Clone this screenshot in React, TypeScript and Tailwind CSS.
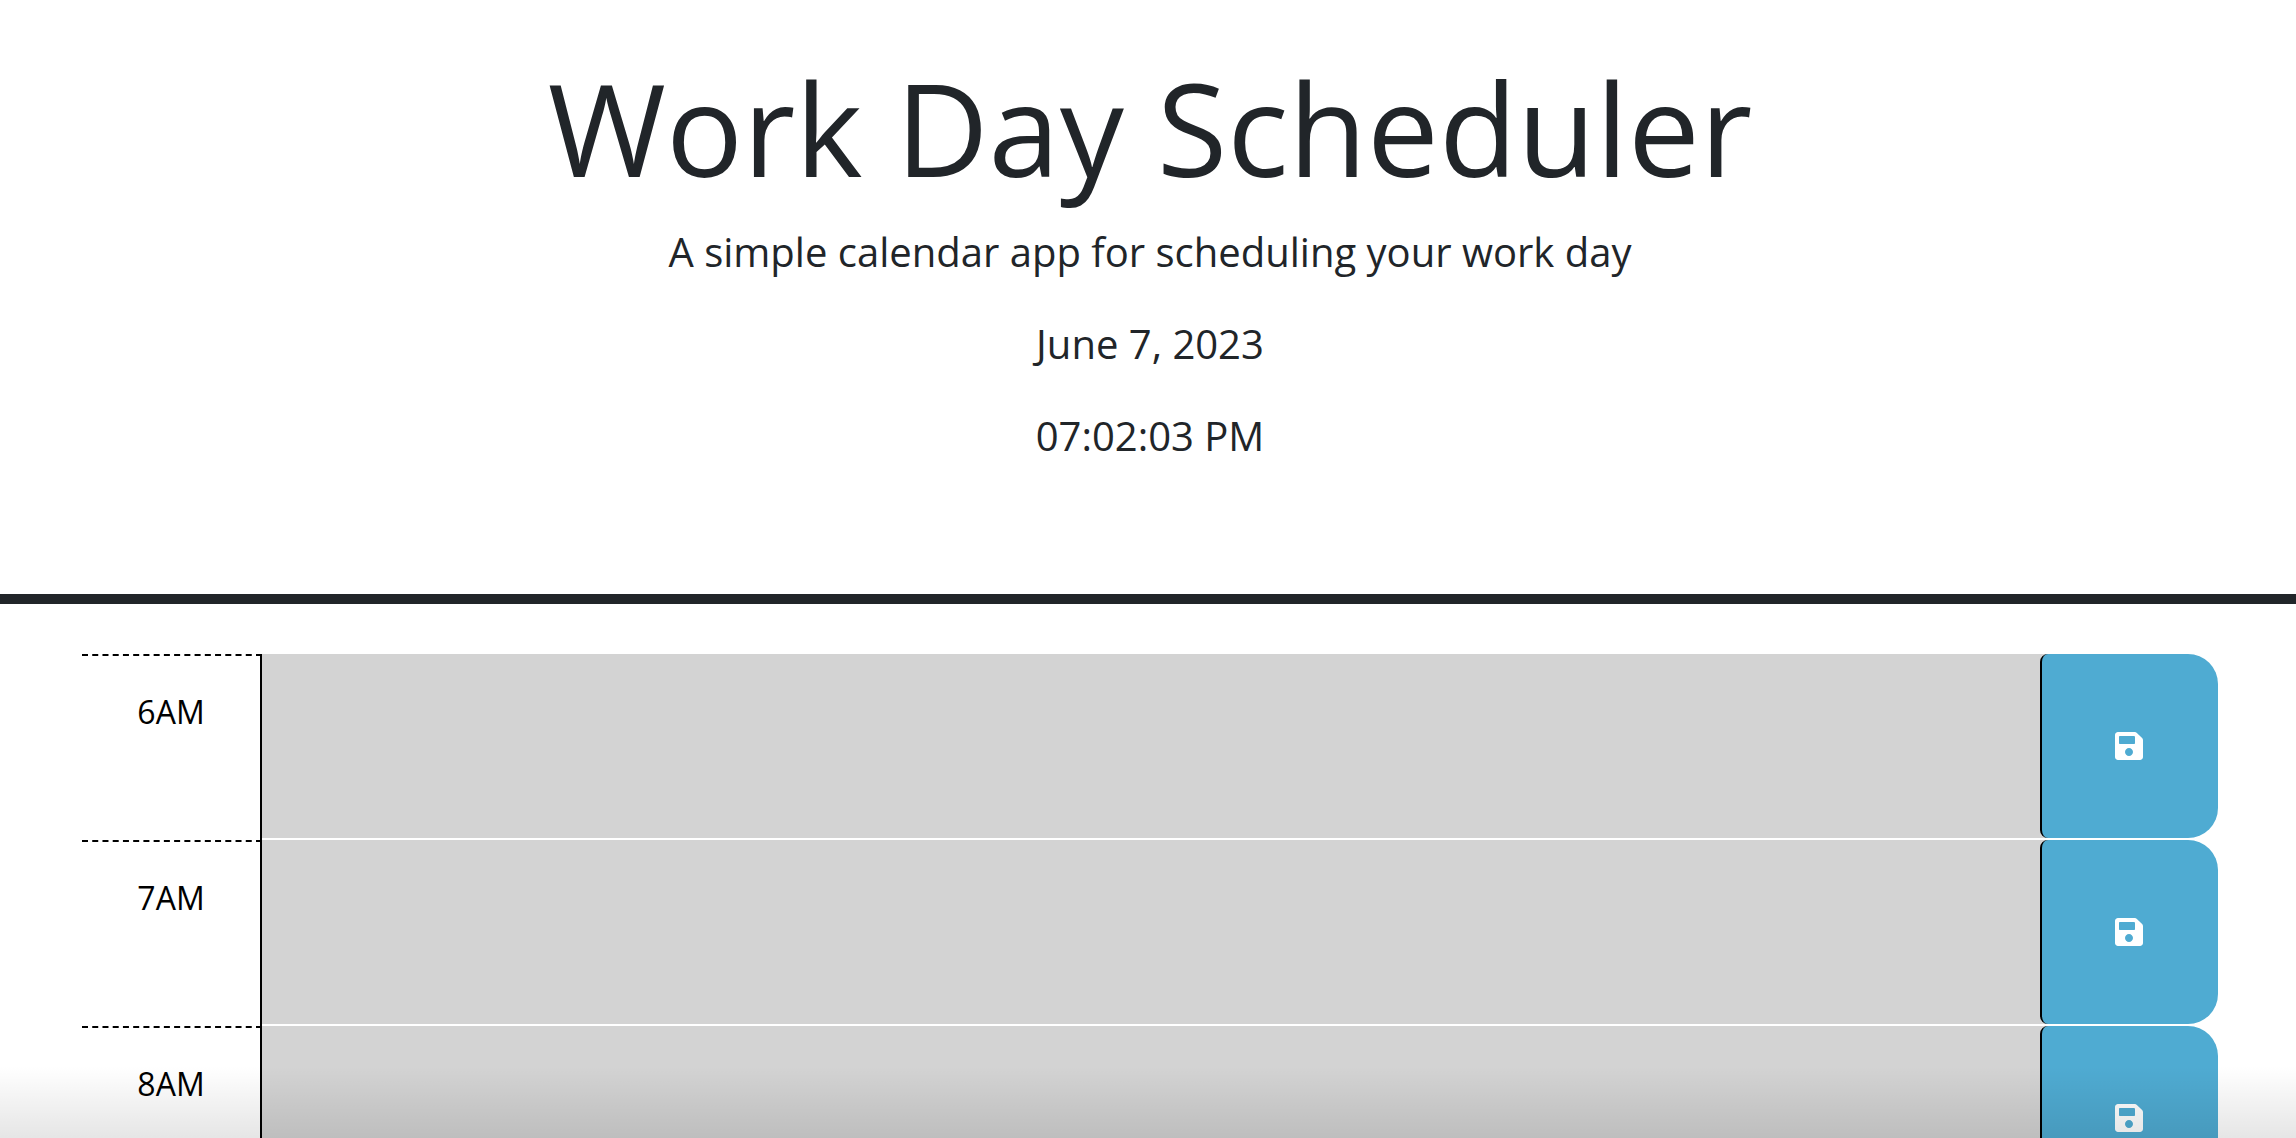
import { FaSave } from "react-icons/fa";

const hours = ["6AM", "7AM", "8AM"];

export default function App() {
  return (
    <div className="relative h-screen overflow-hidden bg-white font-['Open_Sans',sans-serif] text-[#212529]">
      <header className="h-[604px] border-b-[10px] border-[#212529] pt-[51px] pl-[4px] text-center">
        <h1 className="mb-[17px] text-[128px] leading-[1.2] font-normal">Work Day Scheduler</h1>
        <p className="mb-8 text-[40px] leading-[60px] font-normal">A simple calendar app for scheduling your work day</p>
        <p className="mb-8 text-[40px] leading-[60px] font-normal">June 7, 2023</p>
        <p className="mb-8 text-[40px] leading-[60px] font-normal">07:02:03 PM</p>
      </header>

      <main className="mt-[50px] ml-[82px] mr-[78px]">
        {hours.map((hour) => (
          <div key={hour} className="flex h-[186px]">
            <div className="w-[180px] border-t-2 border-r-2 border-dashed border-t-black border-r-black [border-right-style:solid] pt-[32px] text-center text-[32px] leading-[48px] text-black">
              {hour}
            </div>
            <div className="h-[184px] flex-1 bg-[#d3d3d3]" />
            <button className="-ml-2 flex h-[184px] w-[178px] items-center justify-center rounded-l-lg rounded-r-[30px] border-l-2 border-black bg-[#4fabd2] pr-[2px] text-white">
              <FaSave className="h-8 w-8" />
            </button>
          </div>
        ))}
      </main>

      <div className="pointer-events-none absolute inset-x-0 bottom-0 h-[72px] bg-gradient-to-b from-black/0 to-black/10" />
    </div>
  );
}
